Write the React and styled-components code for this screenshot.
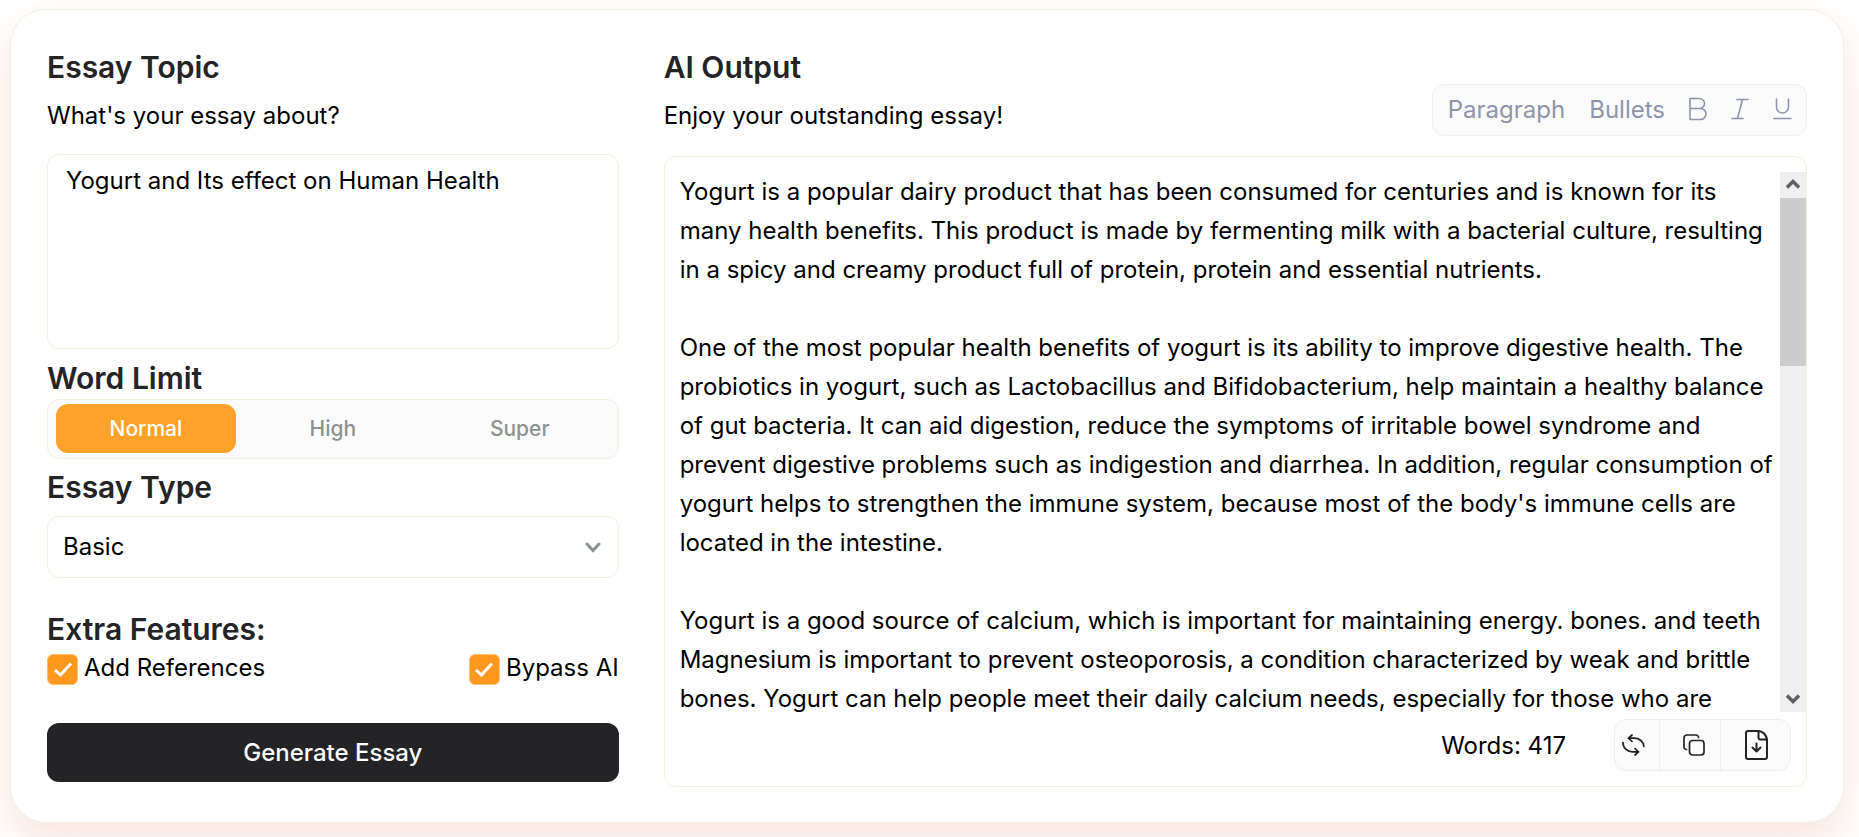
import React, { useState } from "react";
import styled, { createGlobalStyle } from "styled-components";

const GlobalStyle = createGlobalStyle`
  * {
    box-sizing: border-box;
  }

  body {
    margin: 0;
    background: #fff;
    color: #000;
    font-family: Inter, "Liberation Sans", sans-serif;
    font-size: 24px;
    line-height: 29px;
  }

  button, input, select, textarea {
    font: inherit;
    color: inherit;
    margin: 0;
  }
`;

const Page = styled.div`
  padding: 9px 15px 14px 10px;
  overflow: hidden;
`;

const Card = styled.main`
  display: grid;
  grid-template-columns: 1fr 2fr;
  gap: 45px;
  padding: 39px 36px 35px;
  border: 1px solid #f4efe4;
  border-radius: 36px;
  background: #fff;
  box-shadow: 0 20px 44px rgba(205, 95, 50, 0.16);
`;

const Form = styled.form`
  display: flex;
  flex-direction: column;
`;

const Title = styled.h2`
  margin: 0;
  color: #242427;
  font-size: 30px;
  font-weight: 600;
  line-height: 36px;
`;

const Subtitle = styled.label`
  display: block;
  margin-top: 16px;
`;

const Topic = styled.textarea`
  height: 195px;
  margin: 24px 0 11px;
  padding: 11px 18px;
  border: 1px solid #f1f1e2;
  border-radius: 12px;
  background: #fff;
  outline: none;
  resize: none;
`;

const Tabs = styled.div`
  display: grid;
  grid-template-columns: repeat(3, 1fr);
  gap: 7px;
  height: 60px;
  margin: 3px 0 10px;
  padding: 4px 8px 5px;
  border: 1px solid #f1f1e2;
  border-radius: 12px;
  background: #fbfbfb;
`;

const Tab = styled.button`
  padding: 0 6px 1px;
  border: 0;
  border-radius: 12px;
  background: ${(props) => (props.$active ? "#ffa229" : "transparent")};
  color: ${(props) => (props.$active ? "#fff" : "#8b9391")};
  font-size: 21px;
  font-weight: 500;
  cursor: pointer;
`;

const SelectBox = styled.div`
  display: grid;
  align-items: center;
  height: 62px;
  margin: 11px 0 33px;

  select,
  svg {
    grid-area: 1 / 1;
  }

  select {
    height: 100%;
    padding: 0 15px 1px;
    border: 1px solid #f1f1e2;
    border-radius: 12px;
    background: #fff;
    appearance: none;
    outline: none;
  }

  svg {
    justify-self: end;
    margin-right: 18px;
    pointer-events: none;
  }
`;

const Features = styled.div`
  display: flex;
  justify-content: space-between;
  margin: 6px 0 38px;
`;

const CheckLabel = styled.label`
  display: flex;
  gap: 6px;
  cursor: pointer;
`;

const CheckMark = styled.span`
  display: grid;
  width: 31px;
  height: 32px;

  input,
  svg {
    grid-area: 1 / 1;
    place-self: center;
  }

  input {
    width: 31px;
    height: 31px;
    border: 1px solid #ffc079;
    border-radius: 6px;
    background: #fff;
    appearance: none;
  }

  input:checked {
    background: #ff981f;
  }

  svg {
    pointer-events: none;
  }
`;

const Generate = styled.button`
  height: 59px;
  border: 0;
  border-radius: 12px;
  background: #242427;
  color: #fff;
  font-weight: 500;
  cursor: pointer;
`;

const Output = styled.section`
  display: flex;
  flex-direction: column;
  min-width: 0;
`;

const OutputHeader = styled.header`
  display: flex;
  align-items: flex-end;
  justify-content: space-between;
  margin-bottom: 20px;
`;

const Heading = styled.div`
  padding-bottom: 6px;

  p {
    margin: 16px 0 0;
  }
`;

const Toolbar = styled.div`
  display: flex;
  align-items: center;
  gap: 24px;
  height: 52px;
  padding: 0 14px 2px 15px;
  border: 1px solid #efefef;
  border-radius: 12px;
  background: #fbfbfb;
  color: #8f95ab;
`;

const Tool = styled.button`
  display: flex;
  padding: 0;
  border: 0;
  background: none;
  cursor: pointer;
`;

const OutputBox = styled.div`
  display: flex;
  flex-direction: column;
  padding-top: 15px;
  border: 1px solid #f1f1e2;
  border-radius: 12px;
`;

const Viewport = styled.div`
  display: flex;
  height: 540px;
`;

const Essay = styled.article`
  flex: 1;
  padding-left: 15px;
  overflow: hidden;
  line-height: 39px;

  p {
    margin: 0 0 39px;
  }
`;

const ScrollBar = styled.div`
  display: flex;
  flex-direction: column;
  width: 26px;
  background: #efefef;
`;

const ScrollButton = styled.button`
  display: grid;
  place-items: center;
  height: 26px;
  padding: 0;
  border: 0;
  background: none;
`;

const Track = styled.div`
  flex: 1;
`;

const Thumb = styled.div`
  height: 168px;
  background: #cdcdcd;
`;

const OutputFooter = styled.footer`
  display: flex;
  align-items: center;
  justify-content: flex-end;
  gap: 48px;
  padding: 7px 15px 15px;
`;

const Actions = styled.div`
  display: flex;
  height: 52px;
  border: 1px solid #eeeeee;
  border-radius: 12px;
  background: #fbfbfb;
`;

const Action = styled.button`
  display: grid;
  place-items: center;
  width: ${(props) => props.$width}px;
  padding: ${(props) => props.$padding || "0"};
  border: 0;
  background: none;
  color: #242427;
  cursor: pointer;

  & + & {
    border-left: 1px solid #eeeeee;
  }
`;

const Icon = ({ width, height, stroke = 2, children }) => (
  <svg
    width={width}
    height={height}
    viewBox={`0 0 ${width} ${height}`}
    fill="none"
    stroke="currentColor"
    strokeWidth={stroke}
    strokeLinecap="round"
    strokeLinejoin="round"
    aria-hidden="true"
  >
    {children}
  </svg>
);

const essay = [
  "Yogurt is a popular dairy product that has been consumed for centuries and is known for its many health benefits. This product is made by fermenting milk with a bacterial culture, resulting in a spicy and creamy product full of protein, protein and essential nutrients.",
  "One of the most popular health benefits of yogurt is its ability to improve digestive health. The probiotics in yogurt, such as Lactobacillus and Bifidobacterium, help maintain a healthy balance of gut bacteria. It can aid digestion, reduce the symptoms of irritable bowel syndrome and prevent digestive problems such as indigestion and diarrhea. In addition, regular consumption of yogurt helps to strengthen the immune system, because most of the body's immune cells are located in the intestine.",
  "Yogurt is a good source of calcium, which is important for maintaining energy. bones. and teeth Magnesium is important to prevent osteoporosis, a condition characterized by weak and brittle bones. Yogurt can help people meet their daily calcium needs, especially for those who are",
];

const limits = ["Normal", "High", "Super"];

function Checkbox({ label }) {
  return (
    <CheckLabel>
      <CheckMark>
        <input type="checkbox" defaultChecked />
        <svg width="20" height="16" viewBox="0 0 20 16" fill="none" stroke="#fff" strokeWidth="3" aria-hidden="true">
          <path d="M2 9l5.500 5L18 2.500" />
        </svg>
      </CheckMark>
      {label}
    </CheckLabel>
  );
}

function EssayForm() {
  const [limit, setLimit] = useState("Normal");

  return (
    <Form onSubmit={(e) => e.preventDefault()}>
      <Title>Essay Topic</Title>
      <Subtitle htmlFor="topic">What's your essay about?</Subtitle>
      <Topic id="topic" spellCheck={false} defaultValue="Yogurt and Its effect on Human Health" />

      <Title id="limit-title">Word Limit</Title>
      <Tabs role="group" aria-labelledby="limit-title">
        {limits.map((name) => (
          <Tab
            key={name}
            type="button"
            $active={name === limit}
            aria-pressed={name === limit}
            onClick={() => setLimit(name)}
          >
            {name}
          </Tab>
        ))}
      </Tabs>

      <Title id="type-title">Essay Type</Title>
      <SelectBox>
        <select aria-labelledby="type-title" defaultValue="Basic">
          <option>Basic</option>
        </select>
        <svg width="16" height="11" viewBox="0 0 16 11" fill="none" stroke="#8b9391" strokeWidth="3" strokeLinecap="round" aria-hidden="true">
          <path d="M2 2l6 6.5L14 2" />
        </svg>
      </SelectBox>

      <Title>Extra Features:</Title>
      <Features>
        <Checkbox label="Add References" />
        <Checkbox label="Bypass AI" />
      </Features>

      <Generate type="submit">Generate Essay</Generate>
    </Form>
  );
}

function EssayOutput() {
  return (
    <Output>
      <OutputHeader>
        <Heading>
          <Title>AI Output</Title>
          <p>Enjoy your outstanding essay!</p>
        </Heading>
        <Toolbar>
          <Tool>Paragraph</Tool>
          <Tool>Bullets</Tool>
          <Tool aria-label="Bold">
            <Icon width={18} height={24} stroke={1.6}>
              <path d="M1 1.5h9.500a5 5 0 0 1 0 10H1zM1 11.5h10.500a5.500 5.500 0 0 1 0 11H1z" />
            </Icon>
          </Tool>
          <Tool aria-label="Italic">
            <Icon width={18} height={22} stroke={1.6}>
              <path d="M6 1.5h11M1 20.500h11M11.500 1.500l-5 19" />
            </Icon>
          </Tool>
          <Tool aria-label="Underline">
            <Icon width={19} height={22} stroke={1.6}>
              <path d="M3.500 1v8a6 6 0 0 0 12 0V1M1 20.500h17" />
            </Icon>
          </Tool>
        </Toolbar>
      </OutputHeader>

      <OutputBox>
        <Viewport>
          <Essay>
            {essay.map((text, i) => (
              <p key={i}>{text}</p>
            ))}
          </Essay>
          <ScrollBar>
            <ScrollButton aria-label="Scroll up">
              <svg width="14" height="12" viewBox="0 0 14 12" fill="none" stroke="#606060" strokeWidth="3.5">
                <path d="M1 8.5L7 2.500l6 6" />
              </svg>
            </ScrollButton>
            <Track>
              <Thumb />
            </Track>
            <ScrollButton aria-label="Scroll down">
              <svg width="14" height="10" viewBox="0 0 14 10" fill="none" stroke="#606060" strokeWidth="3.5">
                <path d="M1 1.500l6 6 6-6" />
              </svg>
            </ScrollButton>
          </ScrollBar>
        </Viewport>
        <OutputFooter>
          <span>Words: 417</span>
          <Actions>
            <Action $width={44} $padding="0 8px 0 0" aria-label="Regenerate">
              <Icon width={23} height={22} stroke={1.7}>
                <path d="M10 1L6.500 4.200 10 7.500M6.500 4.200H12c5.500 0 9.500 3.300 9.800 8.300M1 8.500c0 5.500 4 9.300 9.500 9.300H16M13 14.500l3.500 3.300L13 21" />
              </Icon>
            </Action>
            <Action $width={61} $padding="0 0 0 8px" aria-label="Copy">
              <Icon width={22} height={22} stroke={1.7}>
                <rect x="6.5" y="6.5" width="14.5" height="14.5" rx="3" />
                <path d="M15.5 3.500A2.500 2.500 0 0 0 13 1H4a3 3 0 0 0-3 3v9a2.500 2.500 0 0 0 2.500 2.500" />
              </Icon>
            </Action>
            <Action $width={70} $padding="0 0 1px 2px" aria-label="Download">
              <Icon width={23} height={30} stroke={2}>
                <path d="M12.500 1H3a2 2 0 0 0-2 2v24a2 2 0 0 0 2 2h17a2 2 0 0 0 2-2V11C22 5 18 1 12.500 1z" />
                <path d="M13.500 1.500v6a2 2 0 0 0 2 2h6M11.500 13.500v8M7.500 17.500l4 4 4-4" />
              </Icon>
            </Action>
          </Actions>
        </OutputFooter>
      </OutputBox>
    </Output>
  );
}

function App() {
  return (
    <>
      <GlobalStyle />
      <Page>
        <Card>
          <EssayForm />
          <EssayOutput />
        </Card>
      </Page>
    </>
  );
}

export default App;
